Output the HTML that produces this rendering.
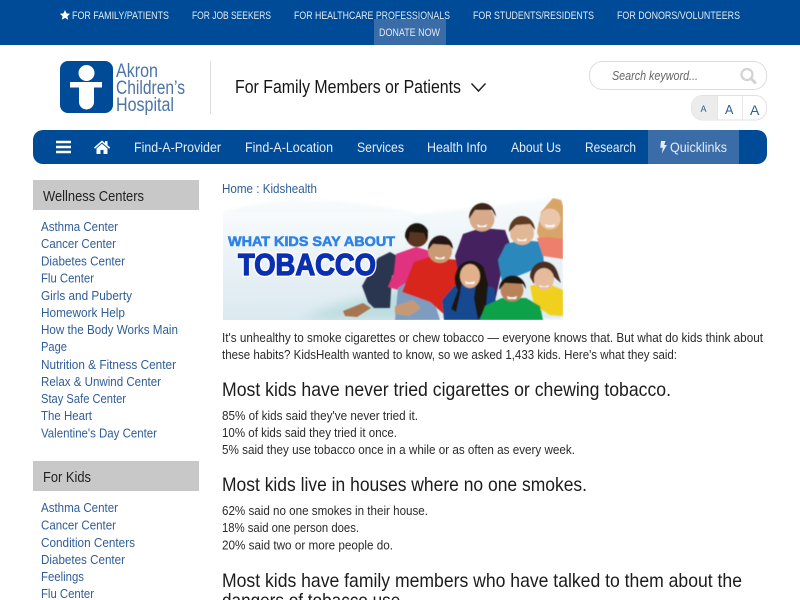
<!DOCTYPE html>
<html lang="en"><head><meta charset="utf-8"><title>Kidshealth</title>
<style>
html,body{margin:0;padding:0;background:#fff;width:800px;height:600px;overflow:hidden}
svg{display:block}
text{font-family:"Liberation Sans",sans-serif}
.top{font-size:11px;fill:#dfe8f3}
.nav{font-size:14px;fill:#e4ecf5}
.l{font-size:13px;fill:#2f5d97}
.b{font-size:13px;fill:#2a2a2a}
.h{font-size:19.500px;fill:#1c1c1c}
.sh{font-size:14.500px;fill:#222}
.logo{font-size:19px;fill:#4a74a5}
</style></head><body>
<svg width="800" height="600" viewBox="0 0 800 600" xmlns="http://www.w3.org/2000/svg">
<defs>
<linearGradient id="sky" x1="0" y1="0" x2="0" y2="1"><stop offset="0" stop-color="#f8fbfc"/><stop offset=".5" stop-color="#e8f1f6"/><stop offset="1" stop-color="#dbeaf0"/></linearGradient>
<filter id="soft"><feGaussianBlur stdDeviation=".6"/></filter>
<filter id="soft2"><feGaussianBlur stdDeviation="5"/></filter>
<filter id="soft3"><feGaussianBlur stdDeviation="1.500"/></filter>
<clipPath id="ban"><rect x="223" y="198" width="340" height="122"/></clipPath>
</defs>
<rect width="800" height="45" fill="#004b97"/>
<rect x="374" y="19" width="72" height="26" fill="#3a6ca8"/>
<path d="M65 10l1.500 3.400 3.600.4-2.700 2.400.8 3.600-3.200-1.900-3.200 1.900.8-3.600-2.700-2.400 3.600-.4z" fill="#fff"/>
<text class="top" x="72" y="19" textLength="97" lengthAdjust="spacingAndGlyphs">FOR FAMILY/PATIENTS</text>
<text class="top" x="192" y="19" textLength="79" lengthAdjust="spacingAndGlyphs">FOR JOB SEEKERS</text>
<text class="top" x="294" y="19" textLength="156" lengthAdjust="spacingAndGlyphs">FOR HEALTHCARE PROFESSIONALS</text>
<text class="top" x="473" y="19" textLength="121" lengthAdjust="spacingAndGlyphs">FOR STUDENTS/RESIDENTS</text>
<text class="top" x="617" y="19" textLength="123" lengthAdjust="spacingAndGlyphs">FOR DONORS/VOLUNTEERS</text>
<text class="top" x="379" y="36" textLength="61" lengthAdjust="spacingAndGlyphs">DONATE NOW</text>

<rect x="60" y="61" width="53" height="52" rx="8" fill="#004b97"/>
<circle cx="86.500" cy="73" r="8" fill="#fff"/>
<rect x="70" y="82" width="32" height="5.500" fill="#fff"/>
<path d="M79 87h15v15a7.500 7.500 0 0 1-15 0z" fill="#fff"/>
<text class="logo" x="116" y="77" textLength="42" lengthAdjust="spacingAndGlyphs">Akron</text>
<text class="logo" x="116" y="94" textLength="69" lengthAdjust="spacingAndGlyphs">Children’s</text>
<text class="logo" x="116" y="111" textLength="58" lengthAdjust="spacingAndGlyphs">Hospital</text>
<rect x="210" y="61" width="1" height="53" fill="#ddd"/>
<text x="235" y="93" font-size="18.500" fill="#151515" textLength="226" lengthAdjust="spacingAndGlyphs">For Family Members or Patients</text>
<path d="M471.500 83.500l7 7.500 7-7.500" fill="none" stroke="#222" stroke-width="1.500"/>

<rect x="589.500" y="61.500" width="177" height="28" rx="13" fill="#fff" stroke="#ddd"/>
<text x="612" y="80" font-size="12.500" font-style="italic" fill="#666" textLength="86" lengthAdjust="spacingAndGlyphs">Search keyword...</text>
<circle cx="747" cy="74.500" r="5.500" fill="none" stroke="#d2d2d2" stroke-width="2.200"/>
<path d="M751 78.500l4 4" stroke="#d2d2d2" stroke-width="3" stroke-linecap="round"/>

<rect x="691.500" y="95.500" width="75" height="24.500" rx="11" fill="#fff" stroke="#e2e2e2"/>
<path d="M717 96h-14a11 11 0 0 0-11 11v2a11 11 0 0 0 11 11h14z" fill="#ececec"/>
<rect x="717" y="96" width="1" height="24" fill="#e6e6e6"/>
<rect x="742" y="96" width="1" height="24" fill="#e6e6e6"/>
<text x="700.500" y="112" font-size="9" fill="#2f5d97">A</text>
<text x="725" y="114" font-size="12.500" fill="#2f5d97">A</text>
<text x="750" y="115" font-size="14" fill="#2f5d97">A</text>

<rect x="33" y="130" width="734" height="34" rx="10" fill="#004b97"/>
<rect x="648" y="130" width="91" height="34" fill="#3a6ca8"/>
<path d="M56 142h15M56 147h15M56 152h15" stroke="#fff" stroke-width="2.400"/>
<path d="M94 147.500l8-7 3 2.600v-2h2.500v4.200l2.700 2.200-1 1.200-7.200-6.200-7 6.200zM96.500 148.500l5.500-4.700 5.500 4.700v5.500h-4v-4h-3v4h-4z" fill="#fff"/>
<text class="nav" x="134" y="152" textLength="87" lengthAdjust="spacingAndGlyphs">Find-A-Provider</text>
<text class="nav" x="245" y="152" textLength="88" lengthAdjust="spacingAndGlyphs">Find-A-Location</text>
<text class="nav" x="357" y="152" textLength="47" lengthAdjust="spacingAndGlyphs">Services</text>
<text class="nav" x="427" y="152" textLength="60" lengthAdjust="spacingAndGlyphs">Health Info</text>
<text class="nav" x="511" y="152" textLength="50" lengthAdjust="spacingAndGlyphs">About Us</text>
<text class="nav" x="585" y="152" textLength="51" lengthAdjust="spacingAndGlyphs">Research</text>
<path d="M661 141h4.500l-1.300 4h2.600l-5 8.800 1-6h-2.500z" fill="#e4ecf5"/>
<text class="nav" x="670" y="152" textLength="57" lengthAdjust="spacingAndGlyphs">Quicklinks</text>

<rect x="33" y="180" width="166" height="30" fill="#c8c8c8"/>
<text class="sh" x="43" y="201" textLength="101" lengthAdjust="spacingAndGlyphs">Wellness Centers</text>
<text class="l" x="41" y="231" textLength="77" lengthAdjust="spacingAndGlyphs">Asthma Center</text>
<text class="l" x="41" y="248" textLength="75" lengthAdjust="spacingAndGlyphs">Cancer Center</text>
<text class="l" x="41" y="265.500" textLength="84" lengthAdjust="spacingAndGlyphs">Diabetes Center</text>
<text class="l" x="41" y="282.500" textLength="53" lengthAdjust="spacingAndGlyphs">Flu Center</text>
<text class="l" x="41" y="300" textLength="91" lengthAdjust="spacingAndGlyphs">Girls and Puberty</text>
<text class="l" x="41" y="317" textLength="84" lengthAdjust="spacingAndGlyphs">Homework Help</text>
<text class="l" x="41" y="334" textLength="137" lengthAdjust="spacingAndGlyphs">How the Body Works Main</text>
<text class="l" x="41" y="351" textLength="26" lengthAdjust="spacingAndGlyphs">Page</text>
<text class="l" x="41" y="369" textLength="135" lengthAdjust="spacingAndGlyphs">Nutrition &amp; Fitness Center</text>
<text class="l" x="41" y="386" textLength="120" lengthAdjust="spacingAndGlyphs">Relax &amp; Unwind Center</text>
<text class="l" x="41" y="403" textLength="85" lengthAdjust="spacingAndGlyphs">Stay Safe Center</text>
<text class="l" x="41" y="420" textLength="51" lengthAdjust="spacingAndGlyphs">The Heart</text>
<text class="l" x="41" y="437.500" textLength="116" lengthAdjust="spacingAndGlyphs">Valentine's Day Center</text>

<rect x="33" y="461" width="166" height="30" fill="#c8c8c8"/>
<text class="sh" x="43" y="482" textLength="48" lengthAdjust="spacingAndGlyphs">For Kids</text>
<text class="l" x="41" y="512" textLength="77" lengthAdjust="spacingAndGlyphs">Asthma Center</text>
<text class="l" x="41" y="529.500" textLength="75" lengthAdjust="spacingAndGlyphs">Cancer Center</text>
<text class="l" x="41" y="547" textLength="94" lengthAdjust="spacingAndGlyphs">Condition Centers</text>
<text class="l" x="41" y="564" textLength="84" lengthAdjust="spacingAndGlyphs">Diabetes Center</text>
<text class="l" x="41" y="581" textLength="43" lengthAdjust="spacingAndGlyphs">Feelings</text>
<text class="l" x="41" y="598" textLength="53" lengthAdjust="spacingAndGlyphs">Flu Center</text>

<text class="l" x="222" y="193" textLength="95" lengthAdjust="spacingAndGlyphs">Home : Kidshealth</text>

<g clip-path="url(#ban)">
<path d="M223 212q60-18 130-9t60 12l150-18v122H223z" fill="url(#sky)" filter="url(#soft3)"/>
<rect x="223" y="212" width="190" height="108" fill="url(#sky)"/>
<path d="M300 320q40-20 80-24l50-20v44z" fill="#bcdde0" filter="url(#soft2)"/>
<g filter="url(#soft)">
<path d="M343 311l20-8 8 5-14 9-12-1z" fill="#a8744f"/>
<path d="M362 286l16-28 12-6 18 10-4 10-12 4-2 32-16 0-6-6z" fill="#2a3550"/>
<path d="M396 254l20-7 14 4 2 24-30 16-14-4 6-14z" fill="#e0307e"/>
<circle cx="417" cy="236" r="11" fill="#5a3522"/><path d="M405 237a12 13 0 0 1 23-6l-1 10-3-8-14-1-2 10z" fill="#1e1410"/>
<path d="M395 320l3-32 12-8 22 14 8 26z" fill="#7d9cc0"/>
<path d="M402 292l12-30 16-5 28 3 2 36-14 20-16-14z" fill="#d8261c"/>
<circle cx="440" cy="251" r="12" fill="#c99a73"/><path d="M428 250a12.500 14 0 0 1 25-1l-4-4-16-1z" fill="#251812"/>
<path d="M455 256l8-22 18-6 24 2 5 14-10 34-6 28-32-14z" fill="#44205f"/>
<circle cx="482" cy="219" r="12.500" fill="#d7ab8a"/><path d="M469 219a13.500 15 0 0 1 27-2l-4-7-17 0z" fill="#3d2515"/>
<path d="M498 260l8-16 16-4 20 2 2 22-16 8-26 10z" fill="#2c88bd"/>
<circle cx="522" cy="233" r="12" fill="#e2b796"/><path d="M509 232a13 15 0 0 1 26-2l-5-6-14 1z" fill="#5e3a20"/>
<path d="M537 232l4-20 12-14 8 2 2 6v50l-18 0z" fill="#d9a468"/>
<path d="M537 238l11-1 15 2v20l-20-3z" fill="#ef7f6d"/>
<circle cx="550" cy="219" r="10.500" fill="#eac6ab"/>
<path d="M442 300l12-14 20-4 20 6 4 32h-54z" fill="#174a90"/>
<path d="M458 290a16 18 0 0 1 26-22l4 16-2 24-8 12-4-22 2-14-6-6-8 2-2 14-4 18-5-3z" fill="#1a120e"/>
<ellipse cx="470" cy="276" rx="10" ry="12" fill="#e2b18c"/>
<path d="M530 286l14-4 19 8v26l-13-1-16-10z" fill="#f0d01e"/>
<path d="M530 277a14 15 0 0 1 27-6l4 12-14-12-11 1-2 12z" fill="#4a2e20"/>
<ellipse cx="544" cy="279" rx="10" ry="11" fill="#e6bb9b"/>
<path d="M480 320l5-14 17-8 24 0 14 8 3 14z" fill="#0aa24a"/>
<circle cx="512" cy="290" r="11.500" fill="#b9825a"/><path d="M499 290a13.500 14 0 0 1 27-1l-3-5-18-1z" fill="#1a1210"/>
<path d="M395 306l18-6 8 8-12 8-14-2z" fill="#c69974"/>
<path d="M477 224q5 4 10 0l-1 3h-8zM517 238q5 4 10 0l-1 3h-8zM435 256q5 4 10 0l-1 3h-8zM465 281q5 3 10 0l-1 3h-8zM507 296q5 3 10 0l-1 3h-8zM545 224q5 3 10 0l-1 3h-8zM539 285q5 3 10 0l-1 2h-8z" fill="#fff"/>
</g>
</g>
<text x="228" y="246" font-size="14" font-weight="bold" fill="#2f83e6" stroke="#2f83e6" stroke-width=".6" textLength="167" lengthAdjust="spacingAndGlyphs">WHAT KIDS SAY ABOUT</text>
<text x="238" y="275" font-size="31" font-weight="bold" fill="#fff" stroke="#fff" stroke-width="4" textLength="138" lengthAdjust="spacingAndGlyphs">TOBACCO</text>
<text x="238" y="275" font-size="31" font-weight="bold" fill="#0a2fb0" stroke="#0a2fb0" stroke-width="1.300" textLength="138" lengthAdjust="spacingAndGlyphs">TOBACCO</text>

<text class="b" x="222" y="342" textLength="541" lengthAdjust="spacingAndGlyphs">It's unhealthy to smoke cigarettes or chew tobacco — everyone knows that. But what do kids think about</text>
<text class="b" x="222" y="359" textLength="455" lengthAdjust="spacingAndGlyphs">these habits? KidsHealth wanted to know, so we asked 1,433 kids. Here's what they said:</text>
<text class="h" x="222" y="396" textLength="449" lengthAdjust="spacingAndGlyphs">Most kids have never tried cigarettes or chewing tobacco.</text>
<text class="b" x="222" y="420" textLength="196" lengthAdjust="spacingAndGlyphs">85% of kids said they've never tried it.</text>
<text class="b" x="222" y="437" textLength="175" lengthAdjust="spacingAndGlyphs">10% of kids said they tried it once.</text>
<text class="b" x="222" y="454" textLength="353" lengthAdjust="spacingAndGlyphs">5% said they use tobacco once in a while or as often as every week.</text>
<text class="h" x="222" y="491" textLength="365" lengthAdjust="spacingAndGlyphs">Most kids live in houses where no one smokes.</text>
<text class="b" x="222" y="515" textLength="206" lengthAdjust="spacingAndGlyphs">62% said no one smokes in their house.</text>
<text class="b" x="222" y="532" textLength="137" lengthAdjust="spacingAndGlyphs">18% said one person does.</text>
<text class="b" x="222" y="549.500" textLength="171" lengthAdjust="spacingAndGlyphs">20% said two or more people do.</text>
<text class="h" x="222" y="587" textLength="520" lengthAdjust="spacingAndGlyphs">Most kids have family members who have talked to them about the</text>
<text class="h" x="222" y="607" textLength="183" lengthAdjust="spacingAndGlyphs">dangers of tobacco use.</text>
</svg>
</body></html>
